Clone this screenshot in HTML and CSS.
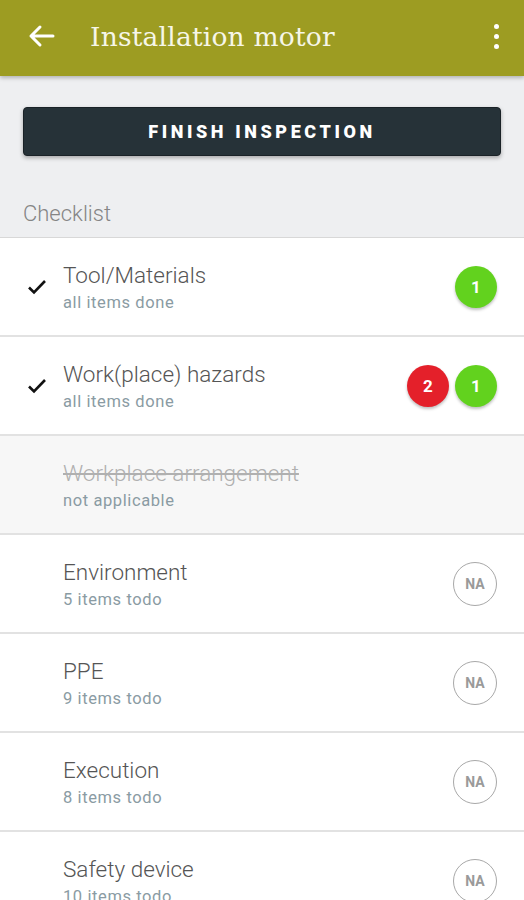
FILE: index.html
```html
<!DOCTYPE html>
<html lang="en">
<head>
  <meta charset="UTF-8" />
  <meta name="viewport" content="width=device-width, initial-scale=1.0"/>
  <title>Installation motor</title>
  <link rel="stylesheet" href="styles.css">
</head>
<body>

  <header class="toolbar">
    <svg class="back" width="28" height="24" viewBox="0 0 28 24">
      <path d="M26 12H4M13 3l-9 9 9 9" fill="none" stroke="#fff" stroke-width="3" stroke-linecap="round" stroke-linejoin="round"/>
    </svg>
    <h1>Installation motor</h1>
    <div class="kebab"><span></span><span></span><span></span></div>
  </header>

  <div class="actions">
    <button class="finish">FINISH INSPECTION</button>
  </div>

  <div class="section-label">Checklist</div>

  <ul class="checklist">
    <li class="row">
      <div class="mark">
        <svg width="20" height="16" viewBox="0 0 20 16"><path d="M2 8.5l5 5L18 2" fill="none" stroke="#111" stroke-width="2.6"/></svg>
      </div>
      <div class="text">
        <div class="title">Tool/Materials</div>
        <div class="sub">all items done</div>
      </div>
      <div class="badges"><span class="badge green">1</span></div>
    </li>
    <li class="row">
      <div class="mark">
        <svg width="20" height="16" viewBox="0 0 20 16"><path d="M2 8.5l5 5L18 2" fill="none" stroke="#111" stroke-width="2.6"/></svg>
      </div>
      <div class="text">
        <div class="title">Work(place) hazards</div>
        <div class="sub">all items done</div>
      </div>
      <div class="badges"><span class="badge red">2</span><span class="badge green">1</span></div>
    </li>
    <li class="row disabled">
      <div class="mark"></div>
      <div class="text">
        <div class="title">Workplace arrangement</div>
        <div class="sub">not applicable</div>
      </div>
    </li>
    <li class="row">
      <div class="mark"></div>
      <div class="text">
        <div class="title">Environment</div>
        <div class="sub">5 items todo</div>
      </div>
      <div class="badges"><span class="badge na">NA</span></div>
    </li>
    <li class="row">
      <div class="mark"></div>
      <div class="text">
        <div class="title">PPE</div>
        <div class="sub">9 items todo</div>
      </div>
      <div class="badges"><span class="badge na">NA</span></div>
    </li>
    <li class="row">
      <div class="mark"></div>
      <div class="text">
        <div class="title">Execution</div>
        <div class="sub">8 items todo</div>
      </div>
      <div class="badges"><span class="badge na">NA</span></div>
    </li>
    <li class="row">
      <div class="mark"></div>
      <div class="text">
        <div class="title">Safety device</div>
        <div class="sub">10 items todo</div>
      </div>
      <div class="badges"><span class="badge na">NA</span></div>
    </li>
  </ul>

</body>
</html>
```

FILE: styles.css
```css
body {
  font-family: Roboto, "Noto Sans", sans-serif;
  margin: 0;
  background: #eeeff1;
  overflow: hidden;
}
.toolbar {
  height: 76px;
  background: #9d9c22;
  display: flex;
  align-items: center;
  padding: 0 27px 4px;
  box-sizing: border-box;
  box-shadow: 0 2px 4px rgba(0, 0, 0, 0.25);
  position: relative;
}
.toolbar h1 {
  flex: 1;
  margin: 0 0 0 35px;
  font-family: "DejaVu Serif", serif;
  font-weight: normal;
  font-size: 26.5px;
  color: #f6f6e8;
  letter-spacing: 0.2px;
}
.kebab {
  display: flex;
  flex-direction: column;
  gap: 5px;
  margin-right: -2px;
}
.kebab span {
  width: 5px;
  height: 5px;
  border-radius: 50%;
  background: #fff;
}
.actions {
  padding: 31px 23px 0;
}
.finish {
  width: 100%;
  height: 49px;
  background: #263238;
  border: 1px solid #1a2227;
  border-radius: 4px;
  color: #fff;
  font-family: Roboto, sans-serif;
  font-weight: 900;
  font-size: 18px;
  letter-spacing: 3.6px;
  box-shadow: 0 2px 4px rgba(0, 0, 0, 0.3);
}
.section-label {
  padding: 45px 23px 11px;
  font-size: 22px;
  font-weight: 300;
  color: #858585;
  border-bottom: 1px solid #d8d8d8;
}
.checklist {
  list-style: none;
  margin: 0;
  padding: 0;
}
.row {
  display: flex;
  align-items: center;
  height: 97px;
  background: #fff;
  border-bottom: 2px solid #e2e2e2;
  padding-right: 27px;
}
.row.disabled {
  background: #f7f7f7;
}
.mark {
  width: 63px;
  flex-shrink: 0;
  display: flex;
  justify-content: flex-start;
  padding-left: 27px;
  box-sizing: border-box;
}
.text {
  flex: 1;
}
.title {
  font-size: 22.5px;
  font-weight: 300;
  color: #555;
  margin-bottom: 5px;
}
.sub {
  font-size: 16.5px;
  color: #8a9ba3;
  letter-spacing: 0.6px;
}
.disabled .title {
  color: #b0b0b0;
  text-decoration: line-through;
}
.badges {
  display: flex;
  gap: 6px;
}
.badge {
  width: 42px;
  height: 42px;
  border-radius: 50%;
  display: flex;
  align-items: center;
  justify-content: center;
  color: #fff;
  font-weight: bold;
  font-size: 17px;
  box-sizing: border-box;
}
.green {
  background: #62d21e;
  box-shadow: 0 2px 3px rgba(0, 0, 0, 0.25);
}
.red {
  background: #e4202a;
  box-shadow: 0 2px 3px rgba(0, 0, 0, 0.25);
}
.na {
  width: 44px;
  height: 44px;
  border: 1.5px solid #a8a8a8;
  color: #9a9a9a;
  font-size: 14px;
}
```
